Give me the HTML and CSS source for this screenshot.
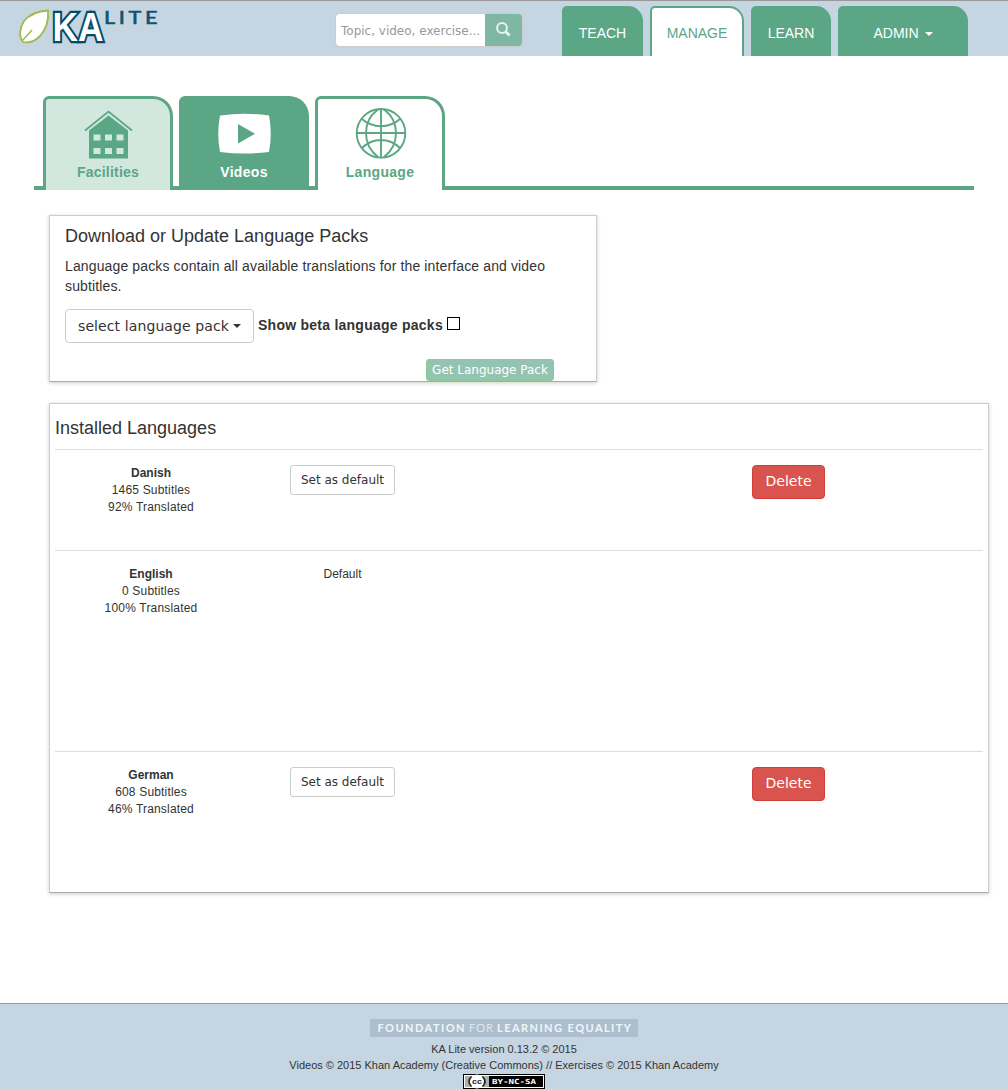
FILE: index.html
```html
<!DOCTYPE html>
<html lang="en">
<head>
<meta charset="utf-8">
<title>KA Lite - Language</title>
<link rel="stylesheet" href="styles.css">
</head>
<body>
<header class="header">
  <a class="logo" aria-label="KA Lite">
    <svg width="142" height="38" viewBox="0 0 142 38">
      <path d="M30 2.500C31 12 29 20 22 28C17 33 11 35.500 5 34C1 29 1 21 6 13C12 6 20 3 30 2.500Z" fill="#fff" stroke="#a0b950" stroke-width="1.8"/>
      <path d="M4 33L14 22" stroke="#a0b950" stroke-width="1.5"/>
      <text class="logo-ka" x="34.500" y="33" textLength="51" lengthAdjust="spacingAndGlyphs">KA</text>
      <text class="logo-lite" x="86" y="15.500" textLength="57" lengthAdjust="spacingAndGlyphs">LITE</text>
    </svg>
  </a>
  <form class="search">
    <input class="search-input" type="text" placeholder="Topic, video, exercise...">
    <button class="search-button" type="button" aria-label="Search">
      <svg width="16" height="16" viewBox="0 0 16 16"><circle cx="6" cy="6" r="4.9" fill="none" stroke="#e9f3f0" stroke-width="2"/><path d="M9.500 9.5L13.500 13.5" stroke="#e9f3f0" stroke-width="2.8"/></svg>
    </button>
  </form>
  <nav class="nav">
    <a class="nav-tab teach">TEACH</a>
    <a class="nav-tab manage active">MANAGE</a>
    <a class="nav-tab learn">LEARN</a>
    <a class="nav-tab admin">ADMIN <i class="caret"></i></a>
  </nav>
</header>
<main class="main">
  <nav class="subnav">
    <a class="subtab facilities">
      <svg width="52" height="52" viewBox="0 0 52 52"><path d="M3 22.500L26.500 3.500L50 22.500" fill="none" stroke="#5ba685" stroke-width="1.7"/><path d="M26.500 7.500L46 22.500V50.500H7V22.500Z" fill="#5ba685"/><path d="M11.500 26.500h7v6h-7zM23 26.500h7v6h-7zM34.500 26.500h7v6h-7zM11.500 40h7v6h-7zM23 40h7v6h-7zM34.500 40h7v6h-7z" fill="#d2e7de"/></svg>
      <span>Facilities</span>
    </a>
    <a class="subtab videos">
      <svg width="56" height="52" viewBox="0 0 56 52"><path d="M4 7.500Q28.500 4 53 7.500Q56.500 26 53 44Q28.500 47 4 44Q.500 26 4 7.500Z" fill="#fff"/><path d="M22 16V35.500L39 25.700Z" fill="#5ba685"/></svg>
      <span>Videos</span>
    </a>
    <a class="subtab language">
      <svg width="52" height="52" viewBox="0 0 52 52" fill="none" stroke="#5ba685" stroke-width="1.9"><circle cx="27" cy="25.300" r="24.300"/><path d="M27 1V50M2.500 25H51.500M24 1.500C8 13 8 37 24 49M30 1.500C46 13 46 37 30 49M8 11Q16 18.200 27 18.200T46 11M8 40Q16 32 27 32T46 40"/></svg>
      <span>Language</span>
    </a>
  </nav>
  <section class="card download">
    <h4 class="title">Download or Update Language Packs</h4>
    <p class="description">Language packs contain all available translations for the interface and video subtitles.</p>
    <div class="controls">
      <button class="btn select">select language pack<i class="caret"></i></button>
      <label class="beta">Show beta language packs <input class="checkbox" type="checkbox"></label>
    </div>
    <div class="download-action"><button class="btn get">Get Language Pack</button></div>
  </section>
  <section class="card installed">
    <h4 class="title">Installed Languages</h4>
    <div class="row danish">
      <div class="info"><b>Danish</b><span>1465 Subtitles</span><span>92% Translated</span></div>
      <div class="state"><button class="btn set">Set as default</button></div>
      <div class="remove"><button class="btn delete">Delete</button></div>
    </div>
    <div class="row english">
      <div class="info"><b>English</b><span>0 Subtitles</span><span>100% Translated</span></div>
      <div class="state">Default</div>
    </div>
    <div class="row german">
      <div class="info"><b>German</b><span>608 Subtitles</span><span>46% Translated</span></div>
      <div class="state"><button class="btn set">Set as default</button></div>
      <div class="remove"><button class="btn delete">Delete</button></div>
    </div>
  </section>
</main>
<footer class="footer">
  <svg class="foundation" width="268" height="18" viewBox="0 0 268 18"><rect width="268" height="18" fill="#adbfce"/><text class="fle-bold" x="7.500" y="13" textLength="87">FOUNDATION</text><text class="fle-thin" x="99" y="13" textLength="24">FOR</text><text class="fle-bold" x="127" y="13" textLength="134">LEARNING EQUALITY</text></svg>
  <div>KA Lite version 0.13.2 © 2015</div>
  <div>Videos © 2015 Khan Academy (Creative Commons) // Exercises © 2015 Khan Academy</div>
  <svg class="license" width="82" height="15" viewBox="0 0 82 15"><rect width="82" height="15"/><rect x="1" y="1" width="80" height="13" fill="#fff"/><rect x="2" y="2" width="24" height="11" fill="#aab2ab"/><rect x="26" y="2" width="54" height="11"/><circle cx="14" cy="7.500" r="7" fill="#fff"/><path d="M8.500 2.500Q3.500 7.500 8.500 12.500M19.500 2.500Q24.500 7.500 19.500 12.500" fill="none" stroke="#222" stroke-width="1.6"/><text class="cc" x="9" y="10" textLength="10" lengthAdjust="spacingAndGlyphs">cc</text><text class="by" x="29" y="10" textLength="44" lengthAdjust="spacingAndGlyphs">BY-NC-SA</text></svg>
</footer>
</body>
</html>
```
FILE: styles.css
```css
* { box-sizing: border-box; }
body { margin: 0; height: 1089px; overflow: hidden; display: flex; flex-direction: column; background: #fff; color: #333; font: 14px/20px "Liberation Sans", Arial, sans-serif; }
svg { display: block; flex-shrink: 0; overflow: visible; }
.header { height: 56px; flex-shrink: 0; display: flex; align-items: flex-start; background: #c5d6e2; border-top: 1px solid #999; }
.logo { margin: 7px 0 0 18px; }
.logo-ka { font: bold 40px "Liberation Sans", Arial, sans-serif; fill: #fff; stroke: #004b69; stroke-width: 4.5px; paint-order: stroke; }
.logo-lite { font: 500 18px Lato, sans-serif; letter-spacing: 3px; fill: #0e536f; stroke: #0e536f; stroke-width: .5px; }
.search { display: flex; width: 188px; height: 34px; margin: 12px 0 0 175px; border: 1px solid #ccc; border-radius: 5px; overflow: hidden; }
.search-input { width: 149px; min-width: 0; padding: 2px 5px 0; border: 0; background: #fff; font: 12px "DejaVu Sans", sans-serif; }
.search-input::placeholder { color: #999; }
.search-button { display: flex; flex: 1; padding: 8px 0 0 11px; border: 0; background: #7fb7a5; }
.nav { display: flex; gap: 7px; height: 50px; margin: 5px 0 0 39px; }
.nav-tab { display: flex; align-items: center; justify-content: center; padding-top: 3px; color: #fff; background: #5ba685; border-radius: 5px 15px 0 0; }
.teach { width: 81px; }
.manage { width: 94px; }
.learn { width: 80px; }
.admin { width: 130px; gap: 6px; }
.active { padding-top: 1px; color: #5ba685; background: #fff; border: 2px solid #5ba685; border-bottom: 0; }
.caret { display: inline-block; border: 4px solid transparent; border-top-color: currentColor; border-bottom: 0; }
.nav .caret { margin-top: 2px; }
.main { flex: 1; padding: 40px 0 0 34px; }
.subnav { display: flex; gap: 6px; width: 940px; height: 94px; padding-left: 9px; border-bottom: 4px solid #5ba685; }
.subtab { display: flex; flex-direction: column; align-items: center; width: 130px; height: 94px; padding-top: 9px; color: #5ba685; font-weight: bold; letter-spacing: .3px; border: 3px solid #5ba685; border-bottom: 0; border-radius: 6px 20px 0 0; }
.subtab span { margin-top: 2px; }
.facilities { background: #d2e7de; }
.facilities span { letter-spacing: .2px; }
.videos { color: #fff; background: #5ba685; }
.language { background: #fff; }
.card { margin-left: 15px; border: 1px solid #ccc; border-bottom-color: #aaa; box-shadow: 0 1px 4px rgba(0, 0, 0, .2); background: #fff; }
.title { margin: 0; font-size: 18px; font-weight: normal; }
.download { width: 548px; height: 167px; margin-top: 25px; padding: 10px 15px 0; }
.description { margin: 10px 0 13px; letter-spacing: .13px; }
.controls { display: flex; align-items: flex-start; gap: 4px; height: 34px; }
.btn { display: inline-flex; align-items: center; justify-content: center; padding: 0; border: 1px solid #ccc; border-radius: 4px; background: #fff; color: #333; font: 14px "DejaVu Sans", sans-serif; }
.select { width: 189px; height: 34px; gap: 4px; letter-spacing: .1px; }
.beta { display: flex; gap: 4px; margin-top: 6px; font-weight: bold; letter-spacing: .25px; }
.checkbox { appearance: none; width: 13px; height: 13px; margin: 2px 0 0; border: 1px solid #000; background: #fff; }
.download-action { display: flex; justify-content: flex-end; margin: 16px 27px 0 0; }
.get { width: 128px; height: 22px; font-size: 12px; color: #fff; background: #94c4b1; border-color: #8bcb8e; border-radius: 3px; }
.installed { width: 940px; height: 490px; margin-top: 21px; padding: 14px 5px 0; }
.installed .title { margin-bottom: 11px; }
.row { display: grid; grid-template-columns: 192px 191px 1fr; padding-top: 15px; border-top: 1px solid #ddd; font-size: 12px; line-height: 17px; }
.danish { height: 101px; }
.english { height: 201px; }
.german { height: 140px; }
.info { display: flex; flex-direction: column; align-items: center; }
.info span { letter-spacing: .18px; }
.state { display: flex; align-items: flex-start; justify-content: center; }
.set { width: 105px; height: 30px; font-size: 12px; border-radius: 3px; }
.remove { padding-left: 314px; }
.delete { width: 73px; height: 34px; padding-bottom: 2px; color: #fff; background: #d9534f; border-color: #d43f3a; }
.footer { display: flex; flex-direction: column; align-items: center; height: 86px; flex-shrink: 0; padding-top: 15px; border-top: 1px solid #999; background: #c5d6e2; font-size: 11px; line-height: 16px; }
.foundation { margin-bottom: 4px; }
.license { margin-top: 1px; }
.fle-bold { font: bold 11px Lato, sans-serif; fill: #fff; opacity: .85; }
.fle-thin { font: 300 11px Lato, sans-serif; fill: #fff; }
.cc { font: bold 8px "Liberation Sans", sans-serif; fill: #222; }
.by { font: bold 7px "DejaVu Sans Mono", monospace; fill: #fff; }
```
